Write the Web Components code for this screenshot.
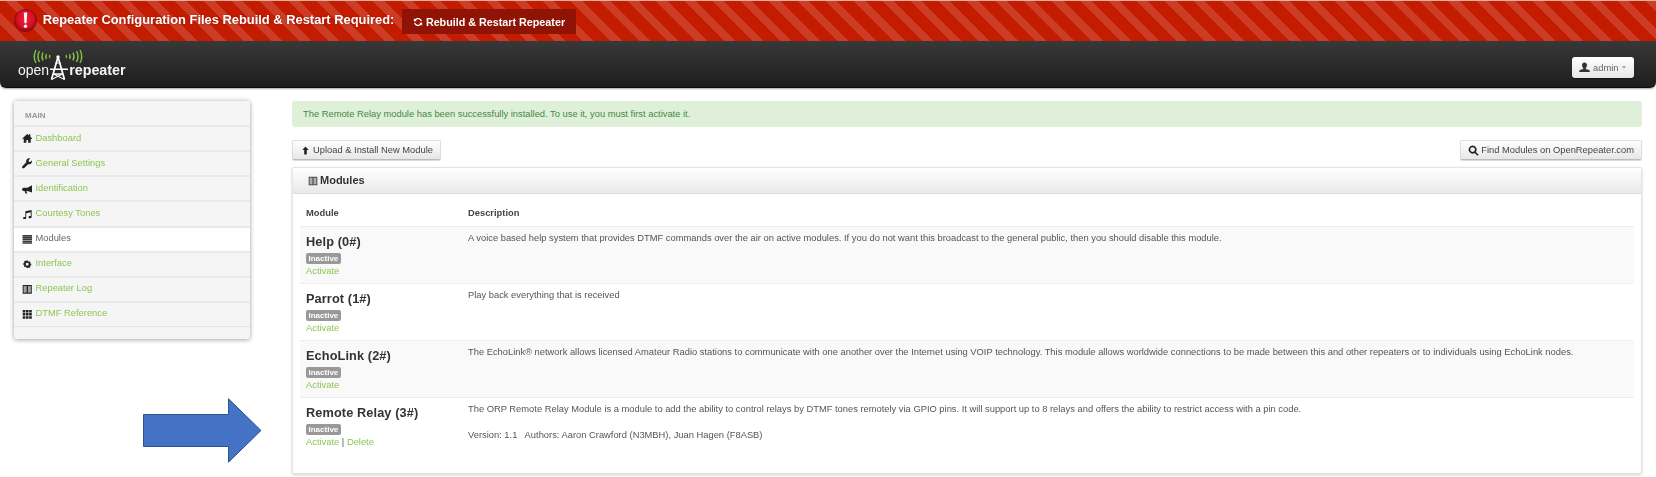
<!DOCTYPE html>
<html lang="en"><head><meta charset="utf-8"><title>Modules</title>
<style>
html,body{margin:0;padding:0;background:#fff;height:477px;overflow:hidden}
body{font:9.35px/15px "Liberation Sans",Arial,sans-serif;color:#555}
</style></head><body>
<orp-app>
  <orp-banner slot="top" text="Repeater Configuration Files Rebuild &amp; Restart Required:" action="Rebuild &amp; Restart Repeater"></orp-banner>
  <orp-header slot="top" user="admin"></orp-header>
  <orp-sidebar slot="side">
    <orp-nav icon="home">Dashboard</orp-nav>
    <orp-nav icon="wrench">General Settings</orp-nav>
    <orp-nav icon="bullhorn">Identification</orp-nav>
    <orp-nav icon="music">Courtesy Tones</orp-nav>
    <orp-nav icon="list" active>Modules</orp-nav>
    <orp-nav icon="cog">Interface</orp-nav>
    <orp-nav icon="book">Repeater Log</orp-nav>
    <orp-nav icon="th">DTMF Reference</orp-nav>
  </orp-sidebar>
  <orp-alert slot="main">The Remote Relay module has been successfully installed. To use it, you must first activate it.</orp-alert>
  <orp-toolbar slot="main">
    <orp-button icon="up">Upload &amp; Install New Module</orp-button>
    <orp-button icon="search">Find Modules on OpenRepeater.com</orp-button>
  </orp-toolbar>
  <orp-panel slot="main" heading="Modules">
    <orp-row head><span slot="name">Module</span><span>Description</span></orp-row>
    <orp-row odd name="Help (0#)" activate>A voice based help system that provides DTMF commands over the air on active modules. If you do not want this broadcast to the general public, then you should disable this module.</orp-row>
    <orp-row name="Parrot (1#)" activate>Play back everything that is received</orp-row>
    <orp-row odd name="EchoLink (2#)" activate>The EchoLink® network allows licensed Amateur Radio stations to communicate with one another over the Internet using VOIP technology. This module allows worldwide connections to be made between this and other repeaters or to individuals using EchoLink nodes.</orp-row>
    <orp-row name="Remote Relay (3#)" activate del>The ORP Remote Relay Module is a module to add the ability to control relays by DTMF tones remotely via GPIO pins. It will support up to 8 relays and offers the ability to restrict access with a pin code.<br><br>Version: 1.1 &nbsp; Authors: Aaron Crawford (N3MBH), Juan Hagen (F8ASB)</orp-row>
  </orp-panel>
  <orp-arrow slot="over"></orp-arrow>
</orp-app>
<script>
const ICONS={
home:'<path d="M6 1 .3 6.200l.7.8L2 6.100V11h3V8h2v3h3V6.100l1 .9.7-.8L9.500 4V1.500H8v1.200z"/>',
wrench:'<path d="M11.600 2.600 9.500 4.600 7.900 4.200 7.500 2.600 9.500.6C8 0 6.500.4 5.600 1.400 4.700 2.300 4.500 3.600 4.900 4.800L.5 9.300c-.6.6-.6 1.500 0 2.100s1.500.6 2.100 0L7 7c1.200.4 2.500.1 3.400-.8 1-.9 1.400-2.400 1.200-3.600z"/>',
bullhorn:'<path d="M11.600 1.200v8.600L6.200 8H5l.9 2.900H3.900L3 8H1.400L.2 7V5.200L1.400 4.200h4.800z"/>',
music:'<path d="M3.800 2.600 11 1v8.200c0 .9-.9 1.500-1.900 1.500S7.400 10.100 7.400 9.300s.9-1.400 1.800-1.400c.3 0 .6 0 .8.100V3.700L4.800 4.900v5.500c0 .8-.9 1.500-1.900 1.500S1.200 11.300 1.200 10.500 2.100 9.100 3 9.100c.3 0 .6 0 .8.100z"/>',
list:'<path d="M.6 1h10.800v1.800H.6zM.6 3.200h10.800V5H.6zM.6 5.400h10.800v1.800H.6zM.6 7.600h10.800v1.800H.6zM.6 9.800h10.800v1.400H.6z" opacity=".9"/>',
cog:'<path fill-rule="evenodd" transform="translate(1.200 .8) scale(.8)" d="M5 1.200h2l.3 1.200 1 .4 1-.6 1.400 1.400-.6 1 .4 1 1.200.3v2l-1.200.3-.4 1 .6 1-1.400 1.400-1-.6-1 .4L7 11.800H5l-.3-1.200-1-.4-1 .6-1.400-1.400.6-1-.4-1-1.200-.3v-2l1.200-.3.4-1-.6-1 1.400-1.400 1 .6 1-.4zM6 4.400a2.100 2.100 0 1 0 0 4.200 2.100 2.100 0 0 0 0-4.200z"/>',
book:'<path fill-rule="evenodd" d="M.8 1h10.400v10H.8zM2 2.200v7.600h3.200V2.200zm4.800 0v7.600H10V2.200z"/><path d="M2 2.200h3.200v7.600H2zM6.800 2.200H10v7.600H6.800z" opacity=".4"/>',
th:'<path d="M.8 1h3v2.900h-3zM4.500 1h3v2.900h-3zM8.200 1h3v2.900h-3zM.8 4.600h3v2.900h-3zM4.500 4.600h3v2.900h-3zM8.200 4.600h3v2.900h-3zM.8 8.200h3v2.900h-3zM4.500 8.200h3v2.900h-3zM8.200 8.200h3v2.900h-3z"/>',
up:'<path d="M6 .8 10.200 5.400H7.700V11.200H4.300V5.400H1.800z"/>',
search:'<path fill-rule="evenodd" d="M5 .6a4.400 4.400 0 0 1 3.600 6.900l3 3-1.300 1.300-3-3A4.400 4.400 0 1 1 5 .6zm0 1.800a2.600 2.600 0 1 0 0 5.200 2.600 2.600 0 0 0 0-5.200z"/>',
user:'<path d="M6 .6c1.700 0 2.700 1.300 2.700 3 0 1.200-.6 2.300-1.300 2.900v1l3.500 1.300c.5.200.8.500.8 1v1.200H.3V9.800c0-.5.3-.8.8-1l3.500-1.300v-1C3.900 5.900 3.300 4.800 3.300 3.600c0-1.700 1-3 2.700-3z"/>',
refresh:'<path d="M10.800 5.200A4.900 4.900 0 0 0 2.300 2.800L1 1.600V5.200h3.600L3.400 4A3.400 3.400 0 0 1 9.300 5.200zM1.200 6.800a4.900 4.900 0 0 0 8.500 2.400l1.300 1.200V6.800H7.400l1.200 1.200A3.400 3.400 0 0 1 2.700 6.800z"/>'
};
const icon=(n,s=12,c='currentColor')=>`<svg width="${s}" height="${s}" viewBox="0 0 12 12" fill="${c}" style="flex:none;display:block" aria-hidden="true">${ICONS[n]}</svg>`;
const esc=s=>s.replace(/&/g,'&amp;');
class Base extends HTMLElement{
  render(html){ if(!this.shadowRoot) this.attachShadow({mode:'open'}); this.shadowRoot.innerHTML=html; }
}
customElements.define('orp-app',class extends Base{connectedCallback(){this.render(`<style>
:host{display:block;position:relative;width:1656px;height:477px;overflow:hidden;filter:blur(.3px)}
.body{display:flex;padding:13px 14px 0 14px;gap:42px;align-items:flex-start}
.side{display:block;width:236px;flex:none}
.main{flex:1;min-width:0;display:flex;flex-direction:column}
</style><slot name="top"></slot><div class="body"><div class="side"><slot name="side"></slot></div><div class="main"><slot name="main"></slot></div></div><slot name="over"></slot>`)}});
customElements.define('orp-banner',class extends Base{connectedCallback(){this.render(`<style>
:host{display:flex;align-items:center;height:40px;padding-left:14px;border-top:1px solid #dfb0a6;
background:repeating-linear-gradient(45deg,#c41c00 0 12px,#cd3d26 12px 20px);color:#fff;font:bold 12.9px/20px "Liberation Sans",Arial,sans-serif}
.t{margin-left:5.700px;position:relative;top:-1.500px;text-shadow:0 0 2px rgba(90,0,0,.5);white-space:nowrap;width:351.300px}
.b{margin-left:8px;height:25px;width:174px;background:#8f1405;display:flex;align-items:center;justify-content:center;gap:3px;font-size:10.750px;box-sizing:border-box;position:relative;top:.5px}
.x{width:23px;height:23px;flex:none;position:relative;top:-1px}
</style><svg class="x" viewBox="0 0 23 23" aria-hidden="true"><defs><radialGradient id="g" cx=".5" cy=".42" r=".6"><stop offset="0" stop-color="#f0223c"/><stop offset=".65" stop-color="#d40f24"/><stop offset="1" stop-color="#8a0510"/></radialGradient></defs><circle cx="11.500" cy="11.500" r="11" fill="url(#g)" stroke="#7c0a10" stroke-width=".8"/><path d="M9.800 3.500h3.400l-.7 10.700h-2z" fill="#fff"/><circle cx="11.500" cy="17.200" r="1.700" fill="#fff"/></svg>
<span class="t">${esc(this.getAttribute('text'))}</span><span class="b">${icon('refresh',10)}<span>${esc(this.getAttribute('action'))}</span></span>`)}});
customElements.define('orp-header',class extends Base{connectedCallback(){this.render(`<style>
:host{display:flex;align-items:flex-start;justify-content:space-between;height:47px;box-sizing:border-box;padding:0 22px 0 18px;
background:linear-gradient(#383838,#1e1e1e);border-bottom:1px solid #0d0d0d;border-radius:0 0 6px 6px;box-shadow:0 1px 2px rgba(0,0,0,.35)}
.logo{display:flex;align-items:flex-start;color:#f4f4f4;margin-top:9px;font:14px/16px "Liberation Sans",Arial,sans-serif}
.o{margin-top:12px;margin-right:1px}
.r{font-weight:700;font-size:14.300px;margin-top:12px;margin-left:1px}
svg.tw{overflow:visible;display:block;flex:none}
.u{display:flex;align-items:center;gap:3px;height:21px;width:62px;box-sizing:border-box;padding-left:7px;margin-top:16px;background:linear-gradient(#fff,#e6e6e6);border-radius:3px;font:9.350px "Liberation Sans",Arial,sans-serif;color:#666;box-shadow:0 1px 1px rgba(0,0,0,.4)}
.c{width:0;height:0;border:2.500px solid transparent;border-top:3px solid #aaa;border-bottom:0;margin-left:1px}
.u svg{color:#333}
</style><div class="logo"><span class="o">open</span><svg class="tw" width="18" height="30" viewBox="0 0 18 30" aria-hidden="true">
<g fill="none" stroke="#7fc241" stroke-width="1.400"><path d="M-14 0Q-17.500 6.500-14 13M-10.500 1Q-13.500 6.500-10.500 12M-7 2.500Q-9 6.500-7 10.500M-3.500 4Q-5 6.500-3.500 9M0 5Q-1 6.500 0 8"/><path d="M16 5Q17 6.500 16 8M19.500 4Q21 6.500 19.500 9M23 2.500Q25 6.500 23 10.500M26.500 1Q29.500 6.500 26.500 12M30 0Q33.500 6.500 30 13"/></g>
<circle cx="8" cy="7" r="1.700" fill="#fff"/><path d="M8 7 1.500 29.500M8 7 14.500 29.500" stroke="#fff" stroke-width="1.700" fill="none"/><path d="M0 19.300H18M3.500 24H12.500" stroke="#fff" stroke-width="1.600"/><path d="M1.500 29.500 12.500 24M14.500 29.500 3.500 24M5.500 13H10.500" stroke="#fff" stroke-width="1.100"/></svg>
<span class="r">repeater</span></div>
<div class="u">${icon('user',11)}<span>${this.getAttribute('user')}</span><i class="c"></i></div>`)}});
customElements.define('orp-sidebar',class extends Base{connectedCallback(){this.render(`<style>
:host{display:block;background:#f5f5f5;border-radius:3px;box-shadow:0 0 5px rgba(0,0,0,.3),0 2px 4px rgba(0,0,0,.12);height:238px;box-sizing:border-box;padding-top:9px}
.h{font:bold 8px/11px "Liberation Sans",Arial,sans-serif;color:#999;padding:0 0 4px 11px;height:15px;box-sizing:border-box}
</style><div class="h">MAIN</div><slot></slot>`)}});
customElements.define('orp-nav',class extends Base{connectedCallback(){const a=this.hasAttribute('active');this.render(`<style>
:host{display:flex;align-items:center;gap:3.500px;height:25.150px;box-sizing:border-box;padding:0 0 0 7.500px;border-top:2px solid #e9e9e9;color:${a?'#666':'#8dc652'};background:${a?'#fff':'transparent'};font:9.350px/15px "Liberation Sans",Arial,sans-serif}
svg{color:#222}
span{position:relative;top:-.5px}
:host(:last-child){border-bottom:1px solid #e3e3e3;height:26px}
</style>${icon(this.getAttribute('icon'),10.5)}<span><slot></slot></span>`)}});
customElements.define('orp-alert',class extends Base{connectedCallback(){this.render(`<style>
:host{display:block;height:26px;box-sizing:border-box;padding:5.500px 11px;background:#dff0d8;border-radius:3px;color:#468847;font:9.350px/14px "Liberation Sans",Arial,sans-serif;margin-bottom:13px}
</style><slot></slot>`)}});
customElements.define('orp-toolbar',class extends Base{connectedCallback(){this.render(`<style>:host{display:flex;justify-content:space-between;margin-bottom:7px}</style><slot></slot>`)}});
customElements.define('orp-button',class extends Base{connectedCallback(){const up=this.getAttribute('icon')=='up';this.render(`<style>
:host{display:inline-flex;align-items:center;gap:${up?3:2}px;height:20px;box-sizing:border-box;padding:0 7px 0 ${up?8:7}px;background:linear-gradient(#fefefe,#e7e7e7);border:1px solid #ddd;border-bottom-color:#bbb;border-radius:2px;color:#444;font:9.350px/14px "Liberation Sans",Arial,sans-serif;box-shadow:0 1px 1px rgba(0,0,0,.15)}
svg{color:#222}
</style>${icon(this.getAttribute('icon'),up?9:11)}<span><slot></slot></span>`)}});
customElements.define('orp-panel',class extends Base{connectedCallback(){this.render(`<style>
:host{display:block;height:307px;box-sizing:border-box;border:1px solid #e4e4e4;border-radius:2px;box-shadow:0 1px 3px rgba(0,0,0,.18);background:#fff}
.h{height:26px;box-sizing:border-box;background:linear-gradient(#fff,#e9e9e9);border-bottom:1px solid #ddd;display:flex;align-items:center;gap:2px;padding-left:15px;font:bold 11px/15px "Liberation Sans",Arial,sans-serif;color:#333}
.b{padding:7px 7px 0}
svg{color:#444}
</style><div class="h">${icon('book',10)}<span>${this.getAttribute('heading')}</span></div><div class="b"><slot></slot></div>`)}});
customElements.define('orp-row',class extends Base{connectedCallback(){
 const head=this.hasAttribute('head'),odd=this.hasAttribute('odd'),del=this.hasAttribute('del');
 const st=`<style>
:host{display:grid;grid-template-columns:168px 1fr;box-sizing:border-box;border-top:1px solid #eee;height:57px;background:${odd?'#f9f9f9':'#fff'};font:9.350px/13px "Liberation Sans",Arial,sans-serif;color:#555}
:host([head]){height:25px;border-top:0;font-weight:bold;color:#444;background:#fff}
.n{padding:6px 6px 0}
.d{padding-top:4.500px}
:host([head]) .n,:host([head]) .d{padding-top:5.500px}
.t{font:bold 12.750px/18px "Liberation Sans",Arial,sans-serif;color:#333;letter-spacing:.1px}
.w{height:12px}
.l{display:block;width:max-content;background:#999;color:#fff;font:bold 8px/11.500px "Liberation Sans",Arial,sans-serif;padding:0 2.500px;border-radius:2px;height:11.500px;margin-top:1.500px}
.a{line-height:13px;color:#8dc652}
.a b{color:#555;font-weight:400}
</style>`;
 if(head){this.render(st+`<div class="n"><slot name="name"></slot></div><div class="d"><slot></slot></div>`);return;}
 this.render(st+`<div class="n"><div class="t">${this.getAttribute('name')}</div><div class="w"><span class="l">Inactive</span></div><div class="a">Activate${del?' <b>|</b> Delete':''}</div></div><div class="d"><slot></slot></div>`);
}});
customElements.define('orp-arrow',class extends Base{connectedCallback(){this.render(`<style>:host{position:absolute;left:143px;top:398px;width:119px;height:65px;display:block}</style><svg width="119" height="65" viewBox="0 0 119 65" aria-hidden="true"><path d="M.5 16.500H85.500V.8L118 32.500 85.500 64.200V48.500H.5z" fill="#4472c4" stroke="#2f528f"/></svg>`)}});
</script></body></html>
